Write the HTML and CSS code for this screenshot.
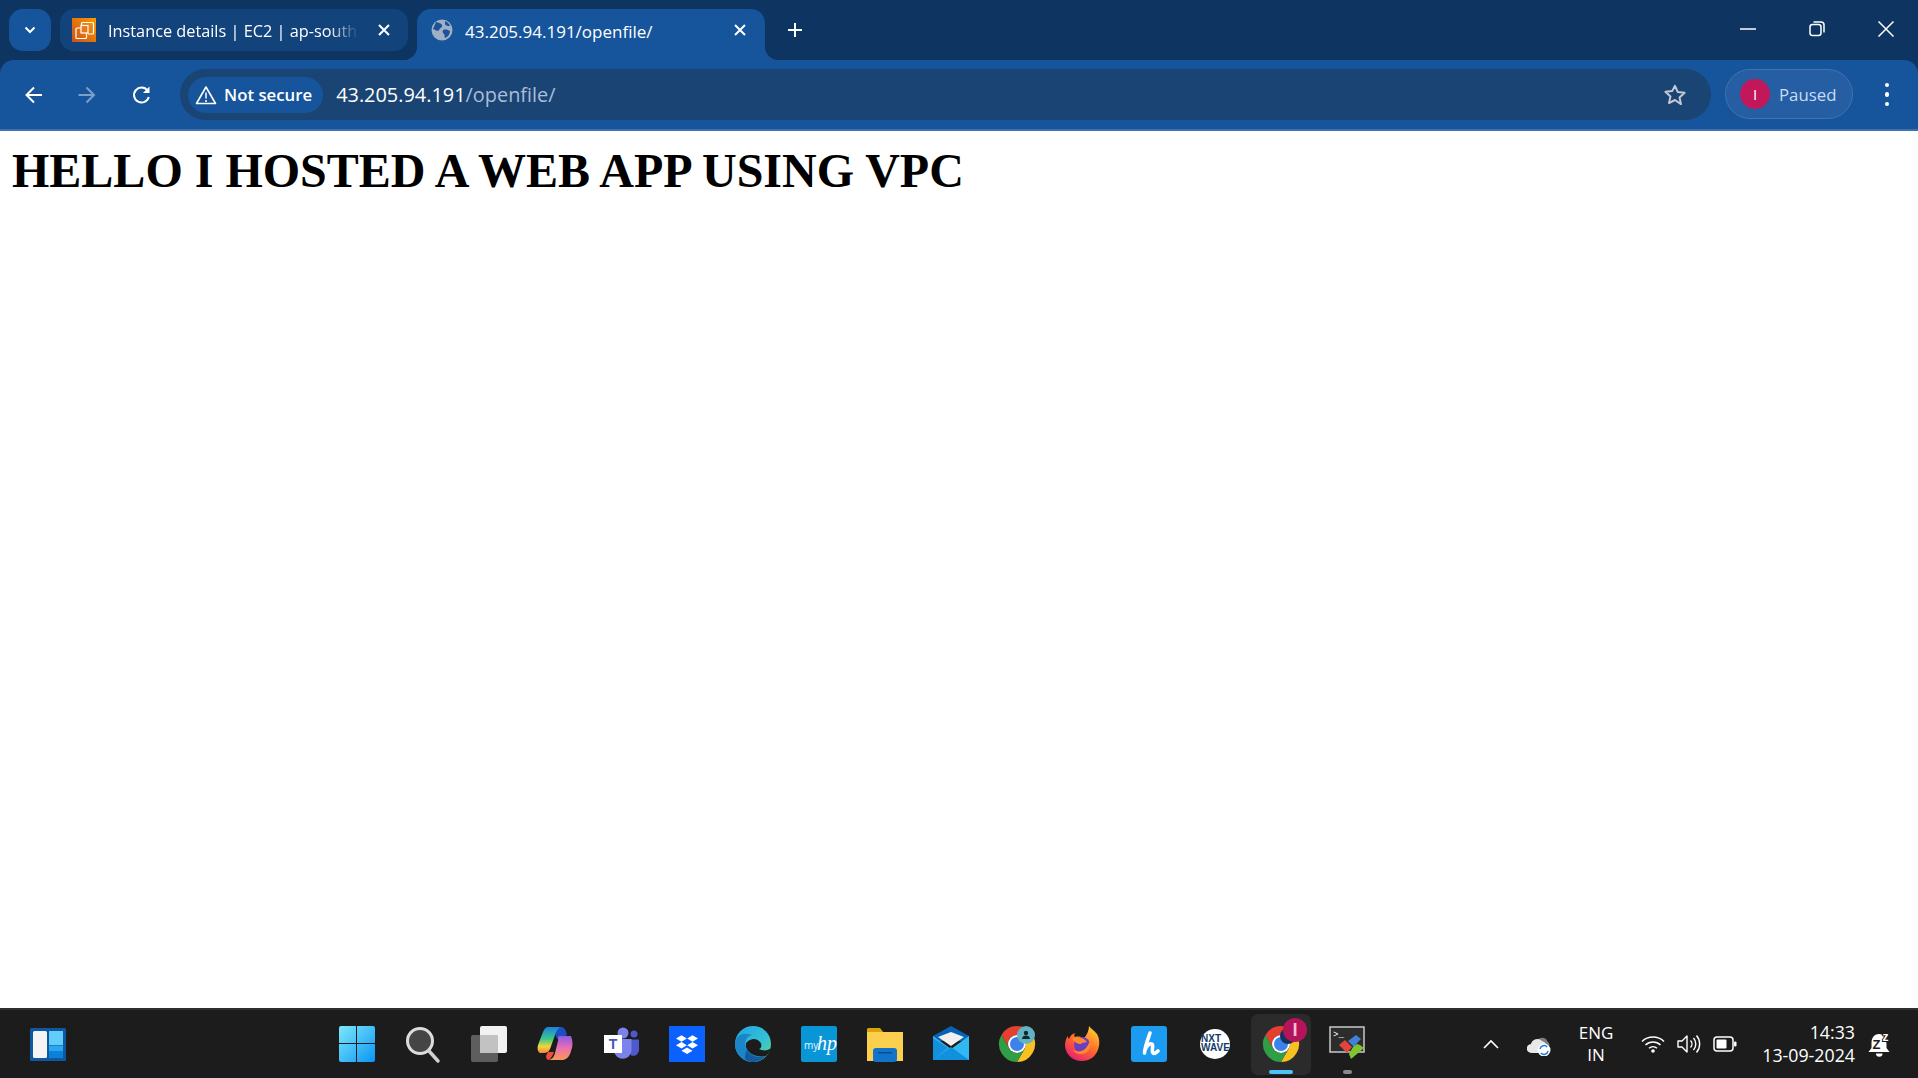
FILE: index.html
```html
<!DOCTYPE html>
<html lang="en">
<head>
  <meta charset="UTF-8">
  <meta name="viewport" content="width=device-width, initial-scale=1.0">
  <link rel="stylesheet" href="styles.css">
  <title>43.205.94.191/openfile/</title>
</head>
<body>
  <!-- browser tabs -->
  <div class="tabstrip">
    <button class="tab-search">
      <svg width="16" height="16" viewBox="0 0 16 16"><path d="M3.500 5.500 8 10l4.500-4.500" fill="none" stroke="#fff" stroke-width="2"/></svg>
    </button>
    <div class="tab">
      <svg class="favicon" width="24" height="24" viewBox="0 0 24 24">
        <defs><linearGradient id="awsGrad" x1="0" y1="1" x2="1" y2="0"><stop offset="0" stop-color="#c8511b"/><stop offset="1" stop-color="#ff9900"/></linearGradient></defs>
        <rect width="24" height="24" fill="url(#awsGrad)"/>
        <path d="M9.500 8V5.500a1 1 0 0 1 1-1h10a1 1 0 0 1 1 1v9.500a1 1 0 0 1-1 1H16" fill="none" stroke="#fff" stroke-width="1.200"/>
        <rect x="4" y="10" width="10.500" height="10.500" rx="1" fill="none" stroke="#fff" stroke-width="1.200"/>
        <rect x="9" y="7.500" width="7" height="7.500" fill="#e8791a" stroke="#fff" stroke-width="1.200"/>
      </svg>
      <span class="tab-title tab-title-fade">Instance details | EC2 | ap-south</span>
      <svg class="tab-close" width="14" height="14" viewBox="0 0 14 14"><path d="M2 2l10 10M12 2 2 12" stroke="#fff" stroke-width="2"/></svg>
    </div>
    <div class="tab tab-active">
      <svg class="favicon-globe" width="22" height="22" viewBox="0 0 22 22">
        <circle cx="11" cy="11" r="10.500" fill="#9fb0c4"/>
        <path d="M5 3c3 1 5 1 6 3s-2 3-3 5-3 0-6-1zM12 11c3-1 5 0 7 1 0 3-2 6-5 7-1-2 0-3-1-4s-2-2-1-4zM14 2c2 1 4 2 5 5-2 0-4 0-5-2z" fill="#1a5399"/>
      </svg>
      <span class="tab-title">43.205.94.191/openfile/</span>
      <svg class="tab-close" width="14" height="14" viewBox="0 0 14 14"><path d="M2 2l10 10M12 2 2 12" stroke="#fff" stroke-width="2"/></svg>
    </div>
    <button class="new-tab">
      <svg width="18" height="18" viewBox="0 0 18 18"><path d="M9 2v14M2 9h14" stroke="#fff" stroke-width="2"/></svg>
    </button>
    <div class="window-controls">
      <svg width="16" height="16" viewBox="0 0 16 16"><path d="M0 8h16" stroke="#fff" stroke-width="1.500"/></svg>
      <svg width="16" height="16" viewBox="0 0 16 16"><rect x="1" y="3.500" width="11" height="11" rx="2.500" fill="none" stroke="#fff" stroke-width="1.500"/><path d="M4.500 1h7.500a3 3 0 0 1 3 3v7.500" fill="none" stroke="#fff" stroke-width="1.500"/></svg>
      <svg width="16" height="16" viewBox="0 0 16 16"><path d="M.5.5l15 15M15.500.5l-15 15" stroke="#fff" stroke-width="1.500"/></svg>
    </div>
  </div>

  <!-- address bar -->
  <div class="toolbar">
    <button class="nav-btn">
      <svg width="22" height="22" viewBox="0 0 22 22"><path d="M19 11H4M11 3.500 3.500 11l7.500 7.500" fill="none" stroke="#fff" stroke-width="2"/></svg>
    </button>
    <button class="nav-btn">
      <svg width="22" height="22" viewBox="0 0 22 22"><path d="M1.500 11h15M9.500 3.500l7.500 7.500-7.500 7.500" fill="none" stroke="#7c9fca" stroke-width="2"/></svg>
    </button>
    <button class="nav-btn">
      <svg width="22" height="22" viewBox="0 0 22 22"><path d="M17.800 13a7.500 7.500 0 1 1-1.300-6.500" fill="none" stroke="#fff" stroke-width="2"/><path d="M18.500 2.500v6.500h-6.500z" fill="#fff"/></svg>
    </button>
    <div class="omnibox">
      <div class="security-chip">
        <svg width="22" height="20" viewBox="0 0 22 20"><path d="M11 2 1.500 18.500h19z" fill="none" stroke="#fff" stroke-width="1.600" stroke-linejoin="round"/><path d="M11 7.500v6M11 15v2" stroke="#fff" stroke-width="1.500"/></svg>
        <span>Not secure</span>
      </div>
      <div class="url"><span class="url-host">43.205.94.191</span>/openfile/</div>
      <svg class="star" width="24" height="24" viewBox="0 0 24 24"><path d="M12 2.800l2.800 6.300 6.800.7-5.100 4.600 1.500 6.700L12 17l-6 3.100 1.500-6.700-5.100-4.600 6.800-.7z" fill="none" stroke="#c2c9d2" stroke-width="2" stroke-linejoin="round"/></svg>
    </div>
    <div class="profile">
      <span class="avatar">I</span>
      <span>Paused</span>
    </div>
    <div class="menu-dots"><i></i><i></i><i></i></div>
  </div>

  <main class="page">
    <h1>HELLO I HOSTED A WEB APP USING VPC</h1>
  </main>

  <!-- windows taskbar -->
  <footer class="taskbar">
    <div class="widgets">
      <svg width="36" height="33" viewBox="0 0 36 33">
        <rect width="36" height="33" rx="1.500" fill="#0f57a0"/>
        <rect x="3" y="3" width="14" height="27" rx="1.500" fill="#f4f4f4"/>
        <rect x="19" y="3" width="14" height="14" fill="#62cdf7"/>
        <rect x="19" y="17.500" width="14" height="6" fill="#28a8f2"/>
        <rect x="19" y="24" width="14" height="6" fill="#0a7fdc"/>
      </svg>
    </div>

    <div class="apps">
      <div class="app">
        <svg width="36" height="36" viewBox="0 0 36 36">
          <defs><linearGradient id="winGrad" x1="0" y1="0" x2="1" y2="1"><stop offset="0" stop-color="#7de8fb"/><stop offset="1" stop-color="#0a95f5"/></linearGradient></defs>
          <path d="M2 0h15v17H0V2a2 2 0 0 1 2-2zM18 0h16a2 2 0 0 1 2 2v15H18zM0 18h17v18H2a2 2 0 0 1-2-2zM18 18h18v16a2 2 0 0 1-2 2H18z" fill="url(#winGrad)"/>
        </svg>
      </div>
      <div class="app">
        <svg width="36" height="36" viewBox="0 0 36 36"><circle cx="15" cy="15" r="12.500" fill="#454545" stroke="#dcdcdc" stroke-width="3"/><path d="M24 25l9 10" stroke="#d0d0d0" stroke-width="3.500" stroke-linecap="round"/></svg>
      </div>
      <div class="app">
        <svg width="36" height="36" viewBox="0 0 36 36"><rect x="0" y="9" width="27" height="27" rx="2" fill="#5e5e5e"/><rect x="9" y="0" width="27" height="27" rx="2" fill="#f2f2f2"/><rect x="9" y="9" width="18" height="18" fill="#c2c2c2"/></svg>
      </div>
      <div class="app">
        <svg width="36" height="36" viewBox="0 0 36 36">
          <defs>
            <linearGradient id="copA" x1="0" y1="0" x2="0" y2="1"><stop offset="0" stop-color="#1f7fe0"/><stop offset=".45" stop-color="#38c98a"/><stop offset=".75" stop-color="#f0d53c"/><stop offset="1" stop-color="#f5873c"/></linearGradient>
            <linearGradient id="copB" x1="0" y1="0" x2="0" y2="1"><stop offset="0" stop-color="#8a5be6"/><stop offset=".5" stop-color="#ec6fb0"/><stop offset="1" stop-color="#f79a55"/></linearGradient>
          </defs>
          <path d="M24 1c3 0 5 3 6 8l-10 4-2-6c1-3 3-6 6-6z" fill="#1b4fc4"/>
          <path d="M11 1h13c-3 1-5 4-6 8l-5 14c-1 3-4 4-6 4H3c-2-1-3-4-2-8L6 6c1-3 3-5 5-5z" fill="url(#copA)"/>
          <path d="M22 10h12c2 5 2 10 0 15-1 4-3 8-8 9H12c3-1 5-3 6-7l3-12c0-3 0-4 1-5z" fill="url(#copB)"/>
          <path d="M11 26h6c-1 3-3 6-5 8-2 0-3-2-3-4z" fill="#ef4f37"/>
        </svg>
      </div>
      <div class="app">
        <svg width="36" height="36" viewBox="0 0 36 36">
          <circle cx="31" cy="8" r="3.500" fill="#5059c9"/>
          <path d="M26 13.500h10v10a6 6 0 0 1-8 6z" fill="#5059c9"/>
          <circle cx="20" cy="7" r="5.500" fill="#7b83eb"/>
          <path d="M11 13h17.500v12a8.800 8.800 0 0 1-17.500 0z" fill="#7b83eb"/>
          <rect x="1" y="9" width="18" height="18" fill="#fff"/>
          <text class="teams-t" x="10" y="23" text-anchor="middle">T</text>
        </svg>
      </div>
      <div class="app">
        <svg width="36" height="36" viewBox="0 0 36 36">
          <rect width="36" height="36" fill="#0a61fe"/>
          <path d="M12.500 9.300l5.300 3.200-5.300 3.200-5.500-3.200zM23.500 9.300l5.500 3.200-5.500 3.200-5.300-3.200zM12.500 16l5.300 3.200-5.300 3.200-5.500-3.200zM23.500 16l5.500 3.200-5.500 3.200-5.300-3.200zM18 21.500l5.500 3.200-5.500 3.300-5.500-3.300z" fill="#fff"/>
        </svg>
      </div>
      <div class="app">
        <svg width="36" height="36" viewBox="0 0 36 36">
          <defs>
            <linearGradient id="edgeA" x1="0" y1="0" x2="1" y2="1"><stop offset="0" stop-color="#1fa4dd"/><stop offset=".6" stop-color="#35c1d8"/><stop offset="1" stop-color="#5fdc70"/></linearGradient>
          </defs>
          <circle cx="18" cy="18" r="18" fill="url(#edgeA)"/>
          <path d="M0 18C1 8 10 6 17 9c-5 1-8 6-6 12 2 7 11 11 20 9-4 4-9 6-13 6C8 36 0 28 0 18z" fill="#1a86c7"/>
          <path d="M11 21c2 7 11 11 20 9 3-3 4-5 5-8-3 3-8 3-12 1 3-1 3-5 1-7-3-3-8-5-14 1 0 1 0 3 0 4z" fill="#1c1c1c"/>
          <path d="M12 24c3 6 12 9 19 6-4 4-9 6-13 6-3 0-6-1-8-3 0-3 0-6 2-9z" fill="#135a9e"/>
        </svg>
      </div>
      <div class="app">
        <svg width="36" height="36" viewBox="0 0 36 36">
          <rect width="36" height="36" rx="2" fill="#0996d6"/>
          <text class="myhp-my" x="3" y="23">my</text>
          <text class="myhp-hp" x="16" y="24">hp</text>
        </svg>
      </div>
      <div class="app">
        <svg width="36" height="36" viewBox="0 0 36 36">
          <path d="M1 2h12l4 5h18v8H0V3z" fill="#dba406"/>
          <path d="M0 6h36v29H0z" fill="#fdcf4f"/>
          <rect x="6" y="22" width="24" height="14" rx="3" fill="#1173c9"/>
          <rect x="11" y="26" width="14" height="1.500" fill="#0c4c8a"/>
        </svg>
      </div>
      <div class="app">
        <svg width="36" height="36" viewBox="0 0 36 36">
          <path d="M0 10 18 0l18 10v5H0z" fill="#0862b5"/>
          <path d="M5 11 18 6l13 5-13 9z" fill="#f0f0f0"/>
          <path d="M0 10l18 13 18-13v24H0z" fill="#30b8f0"/>
          <path d="M0 34V12l15 10zM0 34l18-13 18 13z" fill="#128fdd"/>
        </svg>
      </div>
      <div class="app">
        <svg class="app-chrome" width="36" height="36" viewBox="0 0 36 36">
          <path d="M2.400 9A18 18 0 0 1 33.600 9H18a9 9 0 0 0-7.800 13.500z" fill="#e5402f"/>
          <path d="M33.600 9A18 18 0 0 1 18 36l7.800-13.500A9 9 0 0 0 18 9z" fill="#f8c020"/>
          <path d="M18 36A18 18 0 0 1 2.400 9l7.800 13.500a9 9 0 0 0 15.600 0z" fill="#2f9e44"/>
          <circle cx="18" cy="18" r="9" fill="#fff"/>
          <circle cx="18" cy="18" r="7" fill="#3b82ea"/>
          <circle cx="27" cy="9" r="9" fill="#62b4c4"/>
          <circle cx="27" cy="7" r="2.200" fill="#10282e"/>
          <path d="M23 13c0-2.500 2-3.500 4-3.500s4 1 4 3.500z" fill="#10282e"/>
        </svg>
      </div>
      <div class="app">
        <svg width="36" height="36" viewBox="0 0 36 36">
          <defs>
            <linearGradient id="foxA" x1=".8" y1="0" x2=".2" y2="1"><stop offset="0" stop-color="#ffd02e"/><stop offset=".5" stop-color="#ff6a2b"/><stop offset="1" stop-color="#e6187a"/></linearGradient>
          </defs>
          <path d="M24 0c2 3 5 4 8 8 3 5 3 12 0 18-3 6-9 9-15 9C8 35 1 29 0 20c0-4 1-8 3-10 0 1 0 2 1 3 1-3 3-5 6-6-1 2-1 3 0 4 3-1 7 0 9 1 3-3 5-8 5-12z" fill="url(#foxA)"/>
          <circle cx="17" cy="19" r="8" fill="#6b3fc0"/>
          <path d="M7 12c6-2 12 0 15 4-2 1-5 0-6 2-4 0-7-2-9-6zM25 14c2 6-1 14-9 14-4 0-7-2-8-4 4 2 9 2 12-1s4-6 5-9z" fill="#ff8a2b"/>
        </svg>
      </div>
      <div class="app">
        <svg width="36" height="36" viewBox="0 0 36 36">
          <rect width="36" height="36" rx="3" fill="#1c9cf0"/>
          <path d="M19 7c-2 6-5 13-5.500 20M14 24c2-5 5-7 7-6 2 2-1 7 1 9 1 1 3 0 5-2" fill="none" stroke="#fff" stroke-width="3.600" stroke-linecap="round"/>
        </svg>
      </div>
      <div class="app">
        <svg width="30" height="30" viewBox="0 0 30 30">
          <circle cx="15" cy="15" r="15" fill="#fff"/>
          <text class="nxt" x="1" y="13">NXT</text>
          <text class="nxt" x="1" y="22" textLength="29">WAVE</text>
        </svg>
      </div>
      <div class="app app-active">
        <svg class="app-chrome" width="36" height="36" viewBox="0 0 36 36">
          <path d="M2.400 9A18 18 0 0 1 33.600 9H18a9 9 0 0 0-7.800 13.500z" fill="#e5402f"/>
          <path d="M33.600 9A18 18 0 0 1 18 36l7.800-13.500A9 9 0 0 0 18 9z" fill="#f8c020"/>
          <path d="M18 36A18 18 0 0 1 2.400 9l7.800 13.500a9 9 0 0 0 15.600 0z" fill="#2f9e44"/>
          <circle cx="18" cy="18" r="9" fill="#fff"/>
          <circle cx="18" cy="18" r="7" fill="#3b82ea"/>
          <circle cx="25" cy="10" r="8" fill="#14325c"/>
          <circle cx="32" cy="4" r="12" fill="#b5135a"/>
          <text class="badge-i" x="32" y="10" text-anchor="middle">I</text>
        </svg>
        <i class="running running-active"></i>
      </div>
      <div class="app">
        <svg width="36" height="36" viewBox="0 0 36 36">
          <rect x="1" y="1" width="34" height="25" fill="#2c2c2c" stroke="#c8c8c8" stroke-width="1.500"/>
          <text class="term" x="4" y="11">&gt;_</text>
          <path d="M10 19l6-5 7 7-5 6z" fill="#e2453c"/>
          <path d="M19 15l8-6 5 4-3 3-4 5z" fill="#3f82d8"/>
          <path d="M24 21l4-3 3 1 4 3-13 11-2-5z" fill="#7ec62f"/>
        </svg>
        <i class="running"></i>
      </div>
    </div>

    <div class="tray">
      <div class="tray-up">
        <svg width="16" height="10" viewBox="0 0 16 10"><path d="M1 9l7-7 7 7" fill="none" stroke="#fff" stroke-width="1.600"/></svg>
      </div>
      <div class="tray-cloud">
        <svg width="24" height="24" viewBox="0 0 24 24">
          <path d="M9 12a6 6 0 0 1 11.500-2.500 4.500 4.500 0 0 1 1 6L12 16z" fill="#7e7e7e"/>
          <path d="M4.500 21a4.500 4.500 0 0 1-.5-9A6.500 6.500 0 0 1 15 9a6 6 0 0 1 4 9l-3 3z" fill="#e8e8e8"/>
          <circle cx="17" cy="18" r="6.500" fill="#fff"/>
          <path d="M13 17a4.200 4.200 0 0 1 7.200-2M21 19a4.200 4.200 0 0 1-7.200 2" fill="none" stroke="#2a80d8" stroke-width="1.500"/>
        </svg>
      </div>
      <div class="tray-lang"><div>ENG</div><div>IN</div></div>
      <div class="tray-net">
        <svg width="24" height="18" viewBox="0 0 24 18"><path d="M1 6.500a16 16 0 0 1 22 0M4.500 10a11 11 0 0 1 15 0M8 13.200a6 6 0 0 1 8 0" fill="none" stroke="#fff" stroke-width="1.500"/><circle cx="12" cy="16" r="1.800" fill="#fff"/></svg>
        <svg width="24" height="20" viewBox="0 0 24 20"><path d="M1 7h4l5-5v16l-5-5H1z" fill="none" stroke="#fff" stroke-width="1.400" stroke-linejoin="round"/><path d="M13.500 6.500a5 5 0 0 1 0 7M16.500 4a9 9 0 0 1 0 12M19.500 1.500a13 13 0 0 1 0 17" fill="none" stroke="#fff" stroke-width="1.400"/></svg>
        <svg width="24" height="16" viewBox="0 0 24 16"><rect x="1" y="1" width="19" height="14" rx="3" fill="none" stroke="#fff" stroke-width="1.500"/><rect x="3.500" y="3.500" width="10" height="9" rx="1" fill="#fff"/><rect x="21" y="5.500" width="2.500" height="5" rx="1" fill="#fff"/></svg>
      </div>
      <div class="tray-clock"><div>14:33</div><div>13-09-2024</div></div>
      <div class="tray-bell">
        <svg width="24" height="28" viewBox="0 0 24 28">
          <path d="M13 4C8 4 5.500 8 5.500 13v5l-3 4h21l-3-4v-4c0-5-3-10-7.500-10z" fill="#fff"/>
          <path d="M10 23.500h6.500a3.200 3.200 0 0 1-6.500 0z" fill="#fff"/>
          <text class="zz zz-big" x="6.500" y="19">Z</text>
          <text class="zz zz-small" x="16.500" y="11">z</text>
        </svg>
      </div>
    </div>
  </footer>
</body>
</html>
```

FILE: styles.css
```css
* {
  box-sizing: border-box;
}

body {
  margin: 0;
  height: 100vh;
  display: flex;
  flex-direction: column;
  overflow: hidden;
  background-color: #0e3562; /* shows behind the toolbar's rounded corners */
  font-family: "Open Sans", "Noto Sans", sans-serif;
}

button {
  padding: 0;
  border: none;
  background: none;
  display: flex;
  align-items: center;
  justify-content: center;
}

/* Tab strip */
.tabstrip {
  height: 60px;
  flex-shrink: 0;
  display: flex;
  align-items: flex-start;
  padding: 9px 0 0 9px;
  background-color: #0e3562;
  color: #fff;
}

.tab-search {
  width: 42px;
  height: 42px;
  border-radius: 14px;
  background-color: #16549b;
}

.tab {
  width: 348px;
  height: 42px;
  margin-left: 9px;
  padding: 0 17px 0 12px;
  display: flex;
  align-items: center;
  border-radius: 14px;
  background-color: #12437b;
  font-size: 16.300px;
}

.favicon {
  flex-shrink: 0;
}

.tab-title {
  flex: 1;
  margin-left: 12px;
  padding-top: 2px;
  overflow: hidden;
  white-space: nowrap;
}

.tab-title-fade {
  -webkit-mask-image: linear-gradient(to right, #000 88%, transparent);
  mask-image: linear-gradient(to right, #000 88%, transparent);
}

.tab-close {
  flex-shrink: 0;
  margin-left: 18px;
}

.tab-active {
  position: relative;
  height: 51px;
  border-radius: 14px 14px 0 0;
  background-color: #16549b;
  padding: 0 18px 9px 14px;
  font-size: 17px;
}

.tab-active::before,
.tab-active::after {
  content: "";
  position: absolute;
  bottom: 0;
  width: 14px;
  height: 14px;
  background: radial-gradient(circle at 0 0, #0e3562 14px, #16549b 14.500px);
}

.tab-active::before {
  left: -14px;
}

.tab-active::after {
  right: -14px;
  background: radial-gradient(circle at 100% 0, #0e3562 14px, #16549b 14.500px);
}

.favicon-globe {
  flex-shrink: 0;
}

.new-tab {
  width: 36px;
  height: 42px;
  margin-left: 12px;
}

.window-controls {
  margin-left: auto;
  width: 178px;
  height: 40px;
  padding-right: 24px;
  display: flex;
  align-items: center;
  justify-content: space-between;
}

/* Toolbar */
.toolbar {
  height: 71px;
  flex-shrink: 0;
  display: flex;
  align-items: flex-start;
  padding: 9px 0 0 7px;
  background-color: #16549b;
  border-bottom: 2px solid #3c70ae;
  border-radius: 14px 14px 0 0;
  color: #fff;
}

.nav-btn {
  width: 54px;
  height: 51px;
}

.omnibox {
  width: 1531px;
  height: 51px;
  margin-left: 11px;
  padding: 0 24px 0 8px;
  display: flex;
  align-items: center;
  border-radius: 26px;
  background-color: #1a4474;
}

.security-chip {
  height: 36px;
  padding: 0 11px 0 7px;
  display: flex;
  align-items: center;
  gap: 7px;
  border-radius: 18px;
  background-color: #16549b;
  font-size: 16.800px;
  font-weight: 600;
  white-space: nowrap;
}

.url {
  flex: 1;
  margin-left: 13px;
  font-size: 19.900px;
  color: #a9bed8;
  white-space: nowrap;
}

.url-host {
  color: #fff;
}

.profile {
  width: 128px;
  height: 50px;
  margin-left: 14px;
  padding-left: 14px;
  display: flex;
  align-items: center;
  gap: 9px;
  border: 1.500px solid #4273ad;
  border-radius: 25px;
  background-color: #265ea3;
  color: #c9dcf3;
  font-size: 16.800px;
}

.avatar {
  width: 30px;
  height: 30px;
  border-radius: 50%;
  background-color: #c2185b;
  color: #fff;
  font-size: 15px;
  display: flex;
  align-items: center;
  justify-content: center;
}

.menu-dots {
  width: 65px;
  height: 51px;
  padding-left: 3px;
  display: flex;
  flex-direction: column;
  align-items: center;
  justify-content: center;
  gap: 5px;
}

.menu-dots i {
  width: 4.500px;
  height: 4.500px;
  border-radius: 50%;
  background-color: #fff;
}

/* Page */
.page {
  flex: 1;
  padding: 12px;
  background-color: #fff;
}

.page h1 {
  margin: 0;
  font-family: "Liberation Serif", "Times New Roman", serif;
  font-size: 48px;
  font-weight: bold;
  color: #000;
}

/* Taskbar */
.taskbar {
  height: 70px;
  flex-shrink: 0;
  display: flex;
  align-items: center;
  background-color: #1c1c1c;
  border-top: 2px solid #2f2f2f;
  color: #fff;
}

.widgets {
  width: 324px;
  padding-left: 30px;
  display: flex;
}

.apps {
  display: flex;
  align-items: center;
}

.app {
  position: relative;
  width: 66px;
  height: 68px;
  display: flex;
  align-items: center;
  justify-content: center;
}

.app svg {
  overflow: visible;
}

.app-active::before {
  content: "";
  position: absolute;
  left: 3px;
  right: 3px;
  top: 4px;
  bottom: 3px;
  border-radius: 7px;
  background-color: #2b2b2b;
}

.app-active svg {
  position: relative;
}

.running {
  position: absolute;
  left: 50%;
  bottom: 4px;
  width: 9px;
  height: 4px;
  margin-left: -4.500px;
  border-radius: 2px;
  background-color: #8a8a8a;
}

.running-active {
  width: 24px;
  margin-left: -12px;
  background-color: #4fc3f7;
}

.teams-t {
  font: bold 14px "Liberation Sans", sans-serif;
  fill: #4b53bc;
}

.myhp-my {
  font: 10px "Open Sans", sans-serif;
  fill: #e8f6fc;
}

.myhp-hp {
  font: italic 20px "Liberation Serif", serif;
  fill: #fff;
}

.nxt {
  font: bold 10px "Liberation Sans", sans-serif;
  fill: #123a6b;
}

.badge-i {
  font: bold 17px "Open Sans", sans-serif;
  fill: #f3c2d6;
}

.term {
  font: 9px "Liberation Mono", monospace;
  fill: #fff;
}

.tray {
  margin-left: auto;
  width: 447px;
  display: flex;
  align-items: center;
  font-size: 17px;
}

.tray-up {
  width: 40px;
  display: flex;
  justify-content: center;
}

.tray-cloud {
  width: 56px;
  display: flex;
  justify-content: center;
}

.tray-lang {
  width: 58px;
  text-align: center;
  line-height: 22px;
}

.tray-net {
  width: 108px;
  margin-left: 10px;
  display: flex;
  align-items: center;
  justify-content: space-around;
}

.tray-clock {
  width: 112px;
  font-size: 17.800px;
  text-align: right;
  line-height: 23px;
  white-space: nowrap;
}

.tray-bell {
  width: 24px;
  margin-left: 11px;
  display: flex;
}

.tray-bell svg {
  overflow: visible;
}

.zz {
  font-family: "Liberation Sans", sans-serif;
  font-weight: bold;
}

.zz-big {
  font-size: 13px;
  fill: #1c1c1c;
}

.zz-small {
  font-size: 12px;
  fill: #fff;
  stroke: #1c1c1c;
  stroke-width: 2px;
  paint-order: stroke;
}
```
